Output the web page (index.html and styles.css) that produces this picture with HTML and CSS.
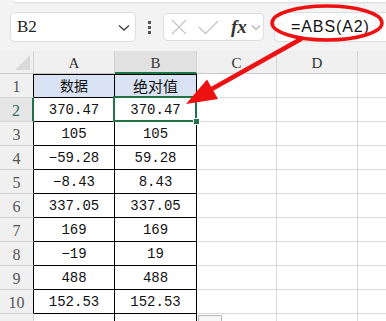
FILE: index.html
```html
<!DOCTYPE html>
<html lang="zh">
<head>
    <meta charset="UTF-8">
    <title>ABS</title>
    <link rel="stylesheet" href="styles.css">
</head>
<body>

<!-- ===== Toolbar ===== -->
<div class="toolbar">
    <div class="top-strip"></div>
    <div class="bar">
        <div class="namebox">
            <span>B2</span>
            <svg class="chev" width="12" height="8" viewBox="0 0 12 8"><path d="M1 1.5 L6 6 L11 1.5" fill="none" stroke="#444" stroke-width="1.4"/></svg>
        </div>
        <div class="dots"><i></i><i></i><i></i></div>
        <div class="iconbox">
            <svg width="16" height="16" viewBox="0 0 16 16"><path d="M1 1 L15 15 M15 1 L1 15" stroke="#c4c4c4" stroke-width="1.3"/></svg>
            <svg width="21" height="15" viewBox="0 0 21 15"><path d="M1 7 L7.5 13.5 L20 1" fill="none" stroke="#c4c4c4" stroke-width="1.3"/></svg>
            <span class="fx">fx</span>
            <svg width="10" height="7" viewBox="0 0 10 7"><path d="M1 1.5 L5 5.5 L9 1.5" fill="none" stroke="#b0b0b0" stroke-width="1.2"/></svg>
        </div>
        <div class="formula">=ABS(A2)</div>
    </div>
</div>

<!-- ===== Sheet ===== -->
<div class="sheet">
    <div class="hd corner"><span class="tri"></span></div>
    <div class="hd">A</div>
    <div class="hd sel">B</div>
    <div class="hd">C</div>
    <div class="hd">D</div>
    <div class="hd last"></div>
</div>

<div class="sheet" id="rows"></div>

<svg class="mark" width="386" height="321" viewBox="0 0 386 321">
    <ellipse cx="327" cy="23" rx="55" ry="17" fill="none" stroke="#ee1111" stroke-width="3.5"/>
    <line x1="301" y1="39" x2="210" y2="90" stroke="#ee1111" stroke-width="4.5" stroke-linecap="round"/>
    <polygon points="186,104 207,79.5 218,99" fill="#ee1111"/>
</svg>

<script>
    const data = [
        ['数据', '绝对值'],
        ['370.47', '370.47'],
        ['105', '105'],
        ['-59.28', '59.28'],
        ['-8.43', '8.43'],
        ['337.05', '337.05'],
        ['169', '169'],
        ['-19', '19'],
        ['488', '488'],
        ['152.53', '152.53']
    ];

    const rows = document.getElementById('rows');
    let html = '';
    data.forEach((r, i) => {
        const n = i + 1;
        const cls = n === 1 ? ' head' : '';
        html += `<div class="rh${n === 2 ? ' cur' : ''}">${n}</div>`;
        html += `<div class="c a${cls}">${r[0].replace('-', '−')}</div>`;
        html += `<div class="c b${cls}${n === 2 ? ' active' : ''}">${r[1]}</div>`;
        html += '<div class="c"></div><div class="c"></div><div class="c last"></div>';
    });
    html += '<div class="rh tail"></div><div class="c a tail"></div><div class="c b tail"></div>';
    html += '<div class="c tail"><span class="paste"></span></div><div class="c tail"></div><div class="c last tail"></div>';
    rows.innerHTML = html;
</script>

</body>
</html>
```

FILE: styles.css
```css
/* ===== Dasar ===== */
body {
    margin: 0;
    width: 386px;
    height: 321px;
    overflow: hidden;
    background: #f3f3f3;
    position: relative;
    font-family: 'Liberation Sans', sans-serif;
}

/* ===== Toolbar ===== */
.toolbar {
    height: 51px;
}

.top-strip {
    height: 2px;
    margin-left: 14px;
    background: #fff;
    border-bottom-left-radius: 5px;
    box-shadow: 0 1px 2px rgba(0, 0, 0, 0.12);
}

.bar {
    display: flex;
    align-items: center;
    margin-top: 10px;
    height: 30px;
    padding-left: 10px;
}

.namebox, .iconbox, .formula {
    height: 28px;
    background: #fff;
    border: 1px solid #dedede;
    border-radius: 5px;
    display: flex;
    align-items: center;
}

.namebox {
    justify-content: space-between;
    padding: 0 5px 0 6px;
    box-sizing: content-box;
    width: 113px;
    font-family: 'Liberation Serif', serif;
    font-size: 17px;
    color: #222;
}

.chev {
    margin-top: 2px;
}

.dots {
    width: 27px;
    display: flex;
    flex-direction: column;
    align-items: center;
    gap: 2px;
}

.dots i {
    width: 3px;
    height: 3px;
    background: #555;
}

.iconbox {
    width: 101px;
    padding-left: 7px;
    box-sizing: border-box;
    gap: 11px;
}

.fx {
    font-family: 'Liberation Serif', serif;
    font-style: italic;
    font-weight: bold;
    font-size: 19px;
    color: #333;
    margin-left: 1px;
    margin-right: -7px;
}

.formula {
    flex: 1;
    margin-left: 10px;
    margin-right: -8px;
    padding-left: 16px;
    font-size: 16px;
    letter-spacing: 0.9px;
    color: #111;
}

/* ===== Lembar ===== */
.sheet {
    display: grid;
    grid-template-columns: 34px 81px 82px 80px 81px 1fr;
    background: #fff;
}

.hd {
    height: 22px;
    background: #f0f0f0;
    border-right: 1px solid #d4d4d4;
    border-bottom: 1px solid #c8c8c8;
    font-family: 'Liberation Serif', serif;
    font-size: 15px;
    color: #333;
    text-align: center;
    line-height: 24px;
}

.corner {
    position: relative;
}

.tri {
    position: absolute;
    right: 3px;
    bottom: 3px;
    width: 0;
    height: 0;
    border-left: 15px solid transparent;
    border-bottom: 15px solid #dadada;
}

.hd.sel {
    background: #e1e1e1;
    height: 21px;
    border-bottom: 2px solid #217346;
}

.hd.last, .c.last {
    border-right: none;
}

.rh {
    height: 23px;
    background: #f0f0f0;
    border-right: 1px solid #000;
    border-bottom: 1px solid #d4d4d4;
    font-family: 'Liberation Serif', serif;
    font-size: 16px;
    color: #555;
    text-align: center;
    line-height: 25px;
}

.rh.cur {
    background: #e6e6e6;
    color: #2f6e5a;
    border-right: 2px solid #217346;
}

.c {
    height: 23px;
    border-right: 1px solid #d9d9d9;
    border-bottom: 1px solid #d9d9d9;
    font-family: 'Liberation Mono', monospace;
    font-size: 14px;
    color: #111;
    text-align: center;
    line-height: 25px;
}

.c.a, .c.b {
    border-right-color: #000;
    border-bottom-color: #000;
}

.c.head {
    background: #dae3f3;
    font-family: 'Noto Sans CJK SC', sans-serif;
    font-size: 15px;
    line-height: 23px;
    box-shadow: inset 0 1px 0 #000;
}

.c.a.head {
    font-size: 14px;
}

.rh.tail, .c.tail {
    height: 7px;
    border-bottom: none;
}

.rh.tail {
    border-right-color: #d4d4d4;
}

/* ===== Sel Aktif ===== */
.c.active {
    position: relative;
}

.c.active::after {
    content: '';
    position: absolute;
    top: -2px;
    left: -2px;
    right: -1px;
    bottom: -1px;
    border: 2px solid #217346;
}

.c.active::before {
    content: '';
    position: absolute;
    right: -4px;
    bottom: -4px;
    width: 5px;
    height: 5px;
    background: #217346;
    border: 1px solid #fff;
    z-index: 2;
}

.paste {
    display: block;
    width: 22px;
    height: 6px;
    margin: 1px 0 0 1px;
    border: 1px solid #b8b8b8;
    border-bottom: none;
    background: #f7f7f7;
}

/* ===== Tanda Merah ===== */
.mark {
    position: absolute;
    top: 0;
    left: 0;
    pointer-events: none;
}
```
